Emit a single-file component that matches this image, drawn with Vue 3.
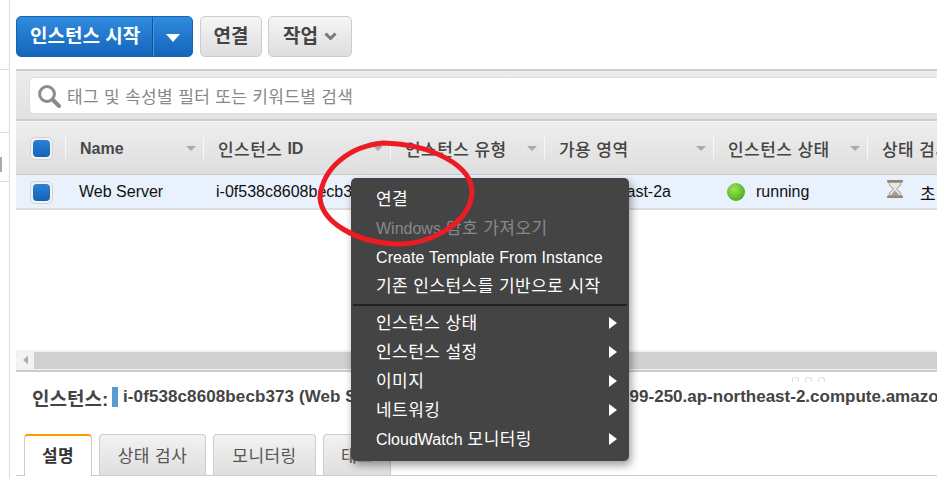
<template>
  <div class="page">
    <aside class="rail">
      <div class="rail-box first"></div>
      <div class="rail-box second"><i class="rail-tick"></i></div>
      <div class="rail-box third"></div>
    </aside>

    <main class="main">
      <div class="toolbar">
        <div class="launch">
          <span class="launch-label">인스턴스 시작</span>
          <span class="launch-caret"><i></i></span>
        </div>
        <button class="btn connect">연결</button>
        <button class="btn action">
          작업
          <svg width="13" height="9" viewBox="0 0 13 9"><path d="M1.500 1.500 L6.500 6.500 L11.500 1.500" fill="none" stroke="#777" stroke-width="3" /></svg>
        </button>
      </div>

      <div class="search-band">
        <div class="search">
          <svg width="24" height="24" viewBox="0 0 24 24">
            <circle cx="10" cy="10" r="7.400" fill="#fff" stroke="#8c8c8c" stroke-width="3" />
            <path d="M15.500 15.500 L22 22" stroke="#8c8c8c" stroke-width="4" stroke-linecap="round" />
          </svg>
          <span class="ko">태그 및 속성별 필터 또는 키워드별 검색</span>
        </div>
      </div>

      <div class="thead">
        <div class="check-cell"><span class="check"></span></div>
        <div
          v-for="col in columns"
          :key="col.label"
          class="th"
          :style="{ width: col.width + 'px' }"
        >
          <span :class="{ ko: col.ko }">{{ col.label }}</span>
          <span v-if="col.suffix" class="th-suffix">{{ col.suffix }}</span>
          <i v-if="col.arrow" class="sort"></i>
        </div>
      </div>

      <div class="row">
        <div class="check-cell"><span class="check"></span></div>
        <div class="td name">Web Server</div>
        <div class="td id">i-0f538c8608becb373</div>
        <div class="td type">t2.micro</div>
        <div class="td zone">ap-northeast-2a</div>
        <div class="td state"><i class="dot"></i>running</div>
        <div class="td check-state">
          <svg class="hourglass" width="18" height="20" viewBox="0 0 18 20">
            <path d="M3 3 C3 8 7 8.500 7.500 10 C7 11.500 3 12 3 17 H15 C15 12 11 11.500 10.500 10 C11 8.500 15 8 15 3 Z" fill="#e9e6dd" stroke="#9a968a" />
            <path d="M4.500 16.500 L9 11.500 L13.500 16.500 Z" fill="#a39e90" />
            <rect x="1" y="1" width="16" height="2.500" rx="1" fill="#8a877d" />
            <rect x="1" y="16.500" width="16" height="2.500" rx="1" fill="#8a877d" />
          </svg>
          <span class="ko">초기화</span>
        </div>
      </div>

      <div class="table-space"></div>

      <div class="scrollbar">
        <i class="scroll-left"></i>
        <div class="thumb"></div>
      </div>

      <div class="details">
        <div class="grip"><i></i><i></i><i></i></div>
        <div class="detail-title">
          <span class="detail-label">인스턴스:</span>
          <i class="detail-bar"></i>
          <span class="detail-id">i-0f538c8608becb373 (Web Server)</span>
          <span class="detail-dns">ec2-13-125-99-250.ap-northeast-2.compute.amazonaws.com</span>
        </div>
        <div class="tabs">
          <div
            v-for="tab in tabs"
            :key="tab.label"
            class="tab"
            :class="{ active: tab.active }"
            :style="{ width: tab.width + 'px' }"
          ><span class="ko">{{ tab.label }}</span></div>
        </div>
      </div>
    </main>

    <div class="menu">
      <template v-for="item in menu" :key="item.label">
        <div v-if="item.divider" class="menu-divider"></div>
        <div v-else class="menu-item" :class="{ disabled: item.disabled, latin: item.latin }">
          <span v-if="item.prefix" class="menu-prefix">{{ item.prefix }}</span><span class="ko">{{ item.label }}</span>
          <i v-if="item.sub" class="menu-arrow"></i>
        </div>
      </template>
    </div>

    <svg class="scribble" width="937" height="479" viewBox="0 0 937 479">
      <path
        d="M383 143 C350 146 322 168 320 198 C322 222 355 242 395 244 C432 245 470 222 472 193 C473 165 430 144 383 143 Z"
        fill="none"
        stroke="#ed1c24"
        stroke-width="5"
      />
    </svg>
  </div>
</template>

<script setup>
const columns = [
  { label: 'Name', width: 138, arrow: true },
  { label: '인스턴스', suffix: 'ID', width: 187, arrow: true, ko: true },
  { label: '인스턴스 유형', width: 154, arrow: true, ko: true },
  { label: '가용 영역', width: 169, arrow: true, ko: true },
  { label: '인스턴스 상태', width: 154, arrow: true, ko: true },
  { label: '상태 검사', width: 120, arrow: false, ko: true }
]

const tabs = [
  { label: '설명', width: 68, active: true },
  { label: '상태 검사', width: 107 },
  { label: '모니터링', width: 103 },
  { label: '태그', width: 68 }
]

const menu = [
  { label: '연결' },
  { prefix: 'Windows', label: '암호 가져오기', disabled: true },
  { label: 'Create Template From Instance', latin: true },
  { label: '기존 인스턴스를 기반으로 시작' },
  { divider: true, label: 'divider' },
  { label: '인스턴스 상태', sub: true },
  { label: '인스턴스 설정', sub: true },
  { label: '이미지', sub: true },
  { label: '네트워킹', sub: true },
  { prefix: 'CloudWatch', label: '모니터링', sub: true }
]
</script>

<style>
html,
body {
  margin: 0;
  background: #fff;
  overflow: hidden;
}
</style>

<style scoped>
.page {
  position: relative;
  display: flex;
  width: 937px;
  height: 479px;
  overflow: hidden;
  background: #fff;
  font-family: "Liberation Sans", "Noto Sans CJK KR", sans-serif;
  font-size: 16px;
  color: #444;
}

.ko {
  font-size: 17px;
  letter-spacing: 0.45px;
}

.rail {
  flex: none;
  width: 9px;
  margin-right: 6px;
  border-right: 1px solid #ddd;
}

.rail-box {
  box-sizing: border-box;
  border-bottom: 1px solid #ddd;
}

.rail-box.first {
  height: 70px;
}

.rail-box.second {
  position: relative;
  height: 63px;
}

.rail-box.third {
  height: 49px;
}

.rail-tick {
  position: absolute;
  left: 0;
  top: 87px;
  z-index: 1;
  width: 2px;
  height: 15px;
  background: #aaa;
}

.main {
  flex: none;
  display: flex;
  flex-direction: column;
  width: 922px;
}

.toolbar {
  display: flex;
  height: 69px;
  padding-top: 16px;
  box-sizing: border-box;
}

.launch {
  display: flex;
  width: 177px;
  height: 41px;
  box-sizing: border-box;
  border: 1px solid #1665b5;
  border-radius: 5px;
  background: linear-gradient(#308bdf, #1465ba);
  color: #fff;
  font-weight: 700;
  font-size: 19px;
  line-height: 39px;
}

.launch-label {
  box-sizing: border-box;
  width: 136px;
  padding-left: 13px;
  border-right: 1px solid #10549e;
  box-shadow: 1px 0 0 #4a94dd;
  white-space: nowrap;
}

.launch-caret {
  display: flex;
  flex: 1;
  align-items: center;
  justify-content: center;
  padding-top: 3px;
}

.launch-caret i {
  width: 0;
  height: 0;
  border-style: solid;
  border-width: 8px 7.500px 0;
  border-color: #fff transparent transparent;
}

.btn {
  display: flex;
  align-items: center;
  justify-content: center;
  gap: 6px;
  height: 41px;
  box-sizing: border-box;
  margin: 0;
  padding: 0 0 4px;
  border: 1px solid #ccc;
  border-radius: 5px;
  background: linear-gradient(#f5f5f5, #dedede);
  color: #444;
  font-family: inherit;
  font-size: 19px;
  font-weight: 700;
}

.connect {
  width: 62px;
  margin-left: 7px;
}

.action {
  width: 84px;
  margin-left: 6px;
}

.action svg {
  margin-top: 3px;
}

.search-band {
  height: 52px;
  box-sizing: border-box;
  padding: 6px 0 7px 13px;
  border-top: 2px solid #ccc;
  border-bottom: 2px solid #ccc;
  background: linear-gradient(#ececec, #e2e2e2);
}

.search {
  display: flex;
  align-items: center;
  gap: 6px;
  height: 37px;
  box-sizing: border-box;
  padding-left: 7px;
  border: 1px solid #ddd;
  border-radius: 5px 0 0 5px;
  background: #fff;
  color: #888;
  white-space: nowrap;
}

.search .ko {
  letter-spacing: 0.35px;
}

.thead {
  display: flex;
  align-items: center;
  height: 54px;
  box-sizing: border-box;
  border-top: 1px solid #f6f6f6;
  border-bottom: 1px solid #ccc;
  background: linear-gradient(#eeeeee, #dedede);
}

.check-cell {
  flex: none;
  box-sizing: border-box;
  width: 49px;
  padding-left: 14px;
}

.check {
  display: flex;
  align-items: center;
  justify-content: center;
  width: 23px;
  height: 23px;
  box-sizing: border-box;
  border: 1px solid #d4d4d4;
  border-radius: 5px;
  background: #f1f1f1;
}

.check::before {
  content: "";
  width: 17px;
  height: 17px;
  border-radius: 4px;
  background: linear-gradient(#2c80d6, #1463b6);
}

.th {
  position: relative;
  flex: none;
  display: flex;
  align-items: center;
  height: 22px;
  box-sizing: border-box;
  padding-top: 2px;
  padding-left: 14px;
  border-left: 1px solid #f8f8f8;
  white-space: nowrap;
  font-weight: 700;
  color: #484848;
}

.th .ko {
  margin-top: -2px;
  font-weight: 500;
  color: #444;
}

.th-suffix {
  margin-left: 5px;
}

.sort {
  position: absolute;
  right: 7px;
  top: 9px;
  width: 0;
  height: 0;
  border-style: solid;
  border-width: 5px 5px 0;
  border-color: #aaa transparent transparent;
}

.row {
  display: flex;
  align-items: center;
  height: 35px;
  box-sizing: border-box;
  padding-top: 1px;
  border-bottom: 2px solid #ddd;
  background: #e8f1fc;
  color: #111;
  white-space: nowrap;
}

.td {
  flex: none;
  box-sizing: border-box;
}

.name {
  width: 138px;
  padding-left: 14px;
}

.id {
  width: 187px;
  padding-left: 13px;
}

.type {
  width: 154px;
  padding-left: 14px;
}

.zone {
  width: 169px;
  padding-left: 14px;
}

.state {
  display: flex;
  align-items: center;
  width: 154px;
  padding-left: 14px;
}

.dot {
  width: 18px;
  height: 18px;
  margin-right: 11px;
  border-radius: 50%;
  background: radial-gradient(circle at 40% 35%, #9fe45c, #4aae1c 75%);
}

.check-state {
  display: flex;
  align-items: center;
  gap: 16px;
  padding-left: 19px;
}

.hourglass {
  margin-bottom: 6px;
}

.table-space {
  height: 140px;
}

.scrollbar {
  display: flex;
  align-items: center;
  height: 22px;
  box-sizing: border-box;
  border-bottom: 2px solid #ccc;
  background: #f2f2f2;
}

.scroll-left {
  width: 0;
  height: 0;
  margin: 0 6px 0 7px;
  border-style: solid;
  border-width: 4.500px 5px 4.500px 0;
  border-color: transparent #aaa transparent transparent;
}

.thumb {
  flex: 1;
  height: 17px;
  background: #d0d0d0;
}

.details {
  position: relative;
  flex: 1;
  box-sizing: border-box;
  padding: 14px 0 0 16px;
}

.grip {
  position: absolute;
  left: 776px;
  top: 5px;
  display: flex;
  gap: 6px;
}

.grip i {
  width: 7px;
  height: 5px;
  border: 1px solid #ddd;
  border-bottom: 0;
  border-radius: 3px 3px 0 0;
  box-sizing: border-box;
}

.detail-title {
  display: flex;
  align-items: center;
  height: 22px;
  font-size: 17px;
  font-weight: 700;
  color: #444;
  white-space: nowrap;
}

.detail-label {
  flex: none;
  width: 80px;
  font-size: 19px;
}

.detail-bar {
  flex: none;
  width: 6px;
  height: 20px;
  margin-right: 5px;
  background: #5b9bd5;
}

.detail-id {
  flex: none;
  width: 228px;
  letter-spacing: 0.1px;
}

.detail-dns {
  flex: none;
  margin-left: 186px;
}

.tabs {
  display: flex;
  gap: 7px;
  height: 42px;
  box-sizing: border-box;
  margin: 26px 0 0 -16px;
  padding-left: 8px;
  border-bottom: 1px solid #ccc;
}

.tab {
  flex: none;
  box-sizing: border-box;
  height: 41px;
  padding-top: 7px;
  border: 1px solid #ccc;
  border-bottom: 0;
  border-radius: 4px 4px 0 0;
  background: linear-gradient(#f2f2f2, #dfdfdf);
  text-align: center;
  color: #555;
}

.tab.active {
  height: 42px;
  border-top: 2px solid #f90;
  padding-top: 6px;
  background: #fff;
  color: #333;
  font-weight: 700;
}

.menu {
  position: absolute;
  left: 351px;
  top: 178px;
  z-index: 5;
  width: 278px;
  height: 283px;
  box-sizing: border-box;
  padding: 7px 0;
  border-radius: 5px;
  background: #444;
  box-shadow: 2px 4px 8px rgba(0, 0, 0, 0.4);
  color: #fff;
}

.menu-item {
  position: relative;
  height: 29px;
  padding-left: 25px;
  line-height: 29px;
  white-space: nowrap;
}

.menu-prefix {
  margin-right: 5px;
}

.menu-item.latin .ko {
  font-size: 16px;
  letter-spacing: 0.1px;
}

.menu-item.disabled {
  color: #888;
}

.menu-divider {
  height: 2px;
  margin: 3px 2px;
  background: #222;
}

.menu-arrow {
  position: absolute;
  right: 12px;
  top: 8px;
  width: 0;
  height: 0;
  border-style: solid;
  border-width: 6.500px 0 6.500px 8px;
  border-color: transparent transparent transparent #fff;
}

.scribble {
  position: absolute;
  left: 0;
  top: 0;
  z-index: 6;
  pointer-events: none;
}
</style>
